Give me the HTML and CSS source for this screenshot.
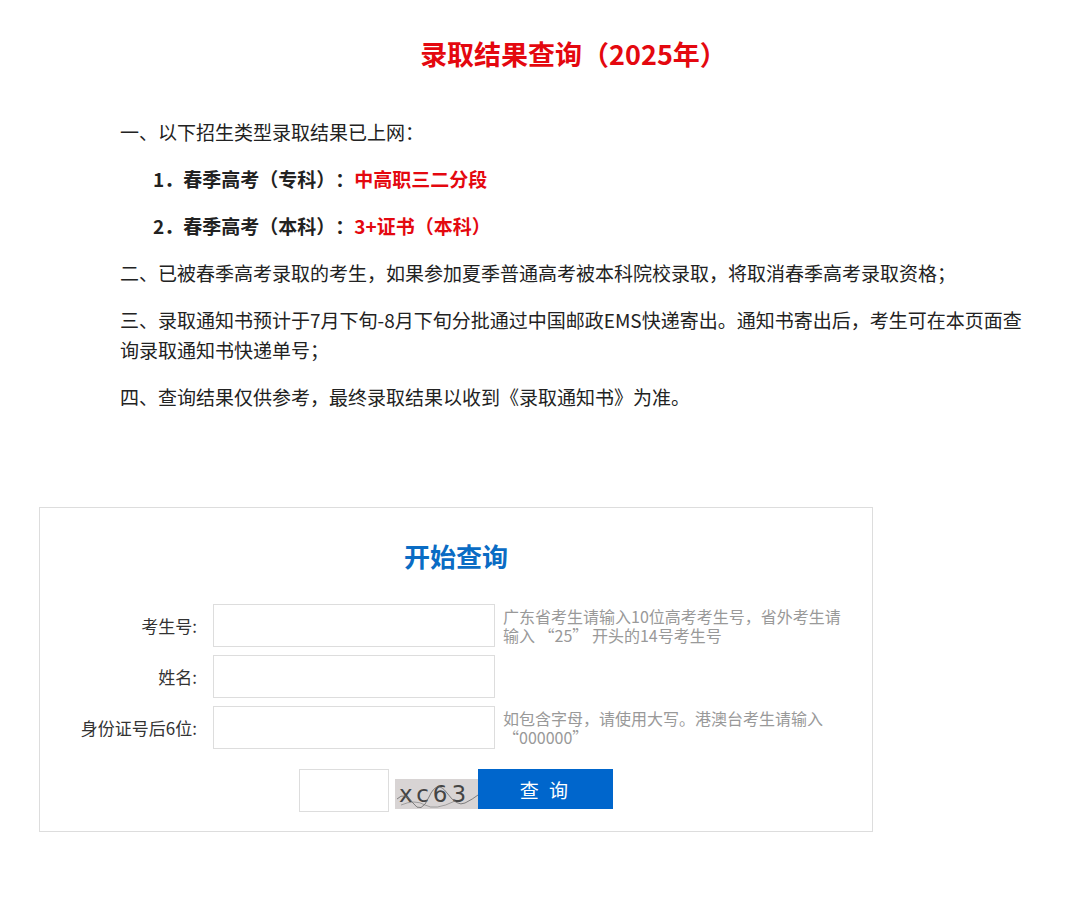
FILE: index.html
```html
<!DOCTYPE html>
<html lang="zh-CN">

<head>
    <meta charset="UTF-8">
    <meta name="viewport" content="width=device-width, initial-scale=1.0">
    <title>录取结果查询（2025年）</title>
    <link rel="stylesheet" href="styles.css">
</head>

<body>

    <div class="notice">
        <h1 class="title">录取结果查询（2025年）</h1>

        <p>一、以下招生类型录取结果已上网：</p>
        <p class="item">1．春季高考（专科）：<span class="red">中高职三二分段</span></p>
        <p class="item">2．春季高考（本科）：<span class="red">3+证书（本科）</span></p>
        <p>二、已被春季高考录取的考生，如果参加夏季普通高考被本科院校录取，将取消春季高考录取资格；</p>
        <p>三、录取通知书预计于7月下旬-8月下旬分批通过中国邮政EMS快递寄出。通知书寄出后，考生可在本页面查询录取通知书快递单号；</p>
        <p>四、查询结果仅供参考，最终录取结果以收到《录取通知书》为准。</p>
    </div>

    <div class="query-box">
        <h2 class="query-title">开始查询</h2>
        <form id="queryForm">
            <div class="row">
                <label for="ksh">考生号:</label>
                <input type="text" id="ksh" name="ksh">
                <span class="hint">广东省考生请输入10位高考考生号，省外考生请输入 “25” 开头的14号考生号</span>
            </div>
            <div class="row">
                <label for="xm">姓名:</label>
                <input type="text" id="xm" name="xm">
                <span class="hint"></span>
            </div>
            <div class="row">
                <label for="sfz">身份证号后6位:</label>
                <input type="text" id="sfz" name="sfz">
                <span class="hint">如包含字母，请使用大写。港澳台考生请输入 “000000”</span>
            </div>
            <div class="captcha-row">
                <input type="text" id="yzm" name="yzm" class="captcha-input">
                <span class="captcha">xc63
                    <svg class="captcha-noise" width="83" height="30" viewBox="0 0 83 30">
                        <path d="M2 20 Q10 12 18 24 T34 18 T52 14 T70 24 T83 16" fill="none" stroke="#666" stroke-width="0.8"/>
                        <path d="M6 26 Q20 20 30 26 T60 22" fill="none" stroke="#777" stroke-width="0.6"/>
                    </svg>
                </span>
                <button type="submit">查 询</button>
            </div>
        </form>
    </div>

</body>

</html>
```

FILE: styles.css
```css
body {
    margin: 0;
    font-family: "Noto Sans CJK SC", "Noto Sans", sans-serif;
    color: #222;
    background: #fff;
    text-spacing-trim: space-all;
}

.notice {
    width: 916px;
    margin-left: 120px;
    padding-top: 36px;
}

.title {
    margin: 0 0 45px 0;
    padding-right: 9px;
    text-align: center;
    font-size: 27px;
    line-height: 36px;
    color: #e4080f;
    font-weight: bold;
}

.notice p {
    margin: 0 0 17px 0;
    font-size: 19px;
    line-height: 30px;
}

.notice p.item {
    padding-left: 33px;
    font-weight: bold;
}

.red {
    color: #e4080f;
}

.query-box {
    width: 832px;
    margin: 95px 0 0 39px;
    border: 1px solid #ddd;
    padding-bottom: 19px;
}

.query-title {
    margin: 30px 0 30px 0;
    text-align: center;
    font-size: 26px;
    line-height: 36px;
    color: #0a6cc4;
    font-weight: bold;
}

.row {
    display: grid;
    grid-template-columns: 157px 282px 345px;
    column-gap: 16px;
    align-items: center;
    margin-bottom: 8px;
}

.row label {
    text-align: right;
    font-size: 17px;
    color: #333;
}

.row input,
.captcha-input {
    box-sizing: border-box;
    height: 43px;
    border: 1px solid #ddd;
    padding: 0 8px;
    font-size: 16px;
}

.hint {
    margin-left: -8px;
    font-size: 16px;
    line-height: 19px;
    color: #999;
}

.captcha-row {
    display: flex;
    align-items: flex-start;
    margin-top: 20px;
    padding-left: 259px;
}

.captcha-input {
    width: 90px;
}

.captcha {
    position: relative;
    width: 83px;
    height: 30px;
    margin: 10px 0 0 6px;
    background: #d8d4d4;
    font-family: "DejaVu Sans", sans-serif;
    font-size: 23px;
    line-height: 30px;
    letter-spacing: 4px;
    color: #444;
    padding-left: 4px;
    box-sizing: border-box;
    overflow: hidden;
}

.captcha-noise {
    position: absolute;
    left: 0;
    top: 0;
}

button {
    width: 135px;
    height: 40px;
    border: none;
    background-color: #0066cc;
    color: #fff;
    font-family: "Noto Sans CJK SC", sans-serif;
    font-size: 19px;
    letter-spacing: 3px;
    cursor: pointer;
}
```
